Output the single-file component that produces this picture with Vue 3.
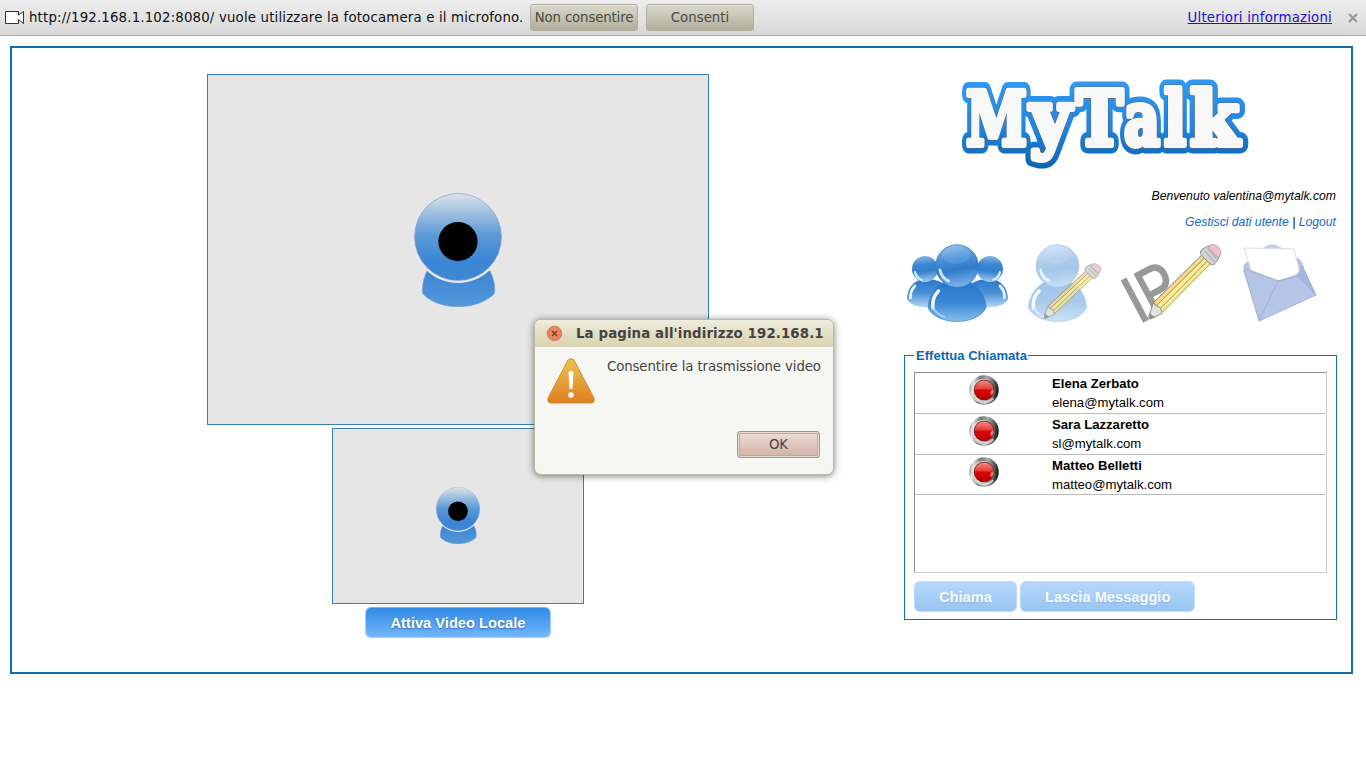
<script setup>
const contacts = [
  { name: 'Elena Zerbato', mail: 'elena@mytalk.com' },
  { name: 'Sara Lazzaretto', mail: 'sl@mytalk.com' },
  { name: 'Matteo Belletti', mail: 'matteo@mytalk.com' },
]
</script>

<template>
  <div class="page">
    <svg class="defs" width="0" height="0" aria-hidden="true">
      <defs>
        <linearGradient id="camHead" x1="0" y1="0" x2="0" y2="1">
          <stop offset="0" stop-color="#dfe3e8" />
          <stop offset=".2" stop-color="#a5c3e0" />
          <stop offset=".48" stop-color="#5c9ad6" />
          <stop offset=".78" stop-color="#3a86d4" />
          <stop offset="1" stop-color="#3e88d4" />
        </linearGradient>
        <linearGradient id="camBase" x1="0" y1="0" x2="0" y2="1">
          <stop offset="0" stop-color="#3c86d2" />
          <stop offset="1" stop-color="#5398da" />
        </linearGradient>
        <symbol id="cam" viewBox="0 0 88 114">
          <path d="M13 78C8 88 8 98 9 101C25 118 63 118 80 101C82 95 80 86 76 78Z" fill="url(#camBase)" stroke="#7f9ccf" stroke-width=".6" />
          <circle cx="44" cy="44.5" r="45.5" fill="#e9e9ec" />
          <circle cx="44" cy="44" r="43.5" fill="url(#camHead)" stroke="#8e9bd0" stroke-width=".7" />
          <circle cx="44" cy="48.5" r="19.6" fill="#000" />
        </symbol>
        <linearGradient id="sideHead" x1=".3" y1="0" x2=".4" y2="1">
          <stop offset="0" stop-color="#86b8e8" />
          <stop offset=".35" stop-color="#3a85d0" />
          <stop offset=".6" stop-color="#3580cd" />
          <stop offset="1" stop-color="#9cc8ef" />
        </linearGradient>
        <linearGradient id="sideBody" x1="0" y1="0" x2="0" y2="1">
          <stop offset="0" stop-color="#2a77c7" />
          <stop offset=".5" stop-color="#4a91d8" />
          <stop offset="1" stop-color="#b5d7f5" />
        </linearGradient>
        <linearGradient id="mainHead" x1=".3" y1="0" x2=".45" y2="1">
          <stop offset="0" stop-color="#8dbce9" />
          <stop offset=".35" stop-color="#4a90d7" />
          <stop offset=".6" stop-color="#2f7ccb" />
          <stop offset="1" stop-color="#7cb5ea" />
        </linearGradient>
        <linearGradient id="mainBody" x1="0" y1="0" x2="0" y2="1">
          <stop offset="0" stop-color="#2476ca" />
          <stop offset=".55" stop-color="#3a87d4" />
          <stop offset="1" stop-color="#86bff0" />
        </linearGradient>
        <symbol id="sidePerson" viewBox="0 0 36 52">
          <path d="M18 23C8 23 0 32 0 43C5 54 32 54 40 43V30Q32 23 18 23Z" fill="url(#sideBody)" />
          <circle cx="18" cy="13" r="13" fill="url(#sideHead)" />
          <path d="M8 16Q9 22 15 24" fill="none" stroke="#d8edff" stroke-width="2.200" stroke-linecap="round" />
          <path d="M3.500 42Q3 35 8 30" fill="none" stroke="#f0f8ff" stroke-width="2.600" stroke-linecap="round" />
        </symbol>
        <symbol id="person" viewBox="0 0 60 78">
          <path d="M29.500 35C14 35 1 48 .5 64C10 82 49 82 58.500 64C58.500 48 45 35 29.500 35Z" fill="url(#mainBody)" stroke="#3b82ca" stroke-width=".7" />
          <circle cx="29.500" cy="22" r="21.300" fill="url(#mainHead)" stroke="#3179c5" stroke-width=".7" />
          <ellipse cx="28.500" cy="11" rx="14" ry="9" fill="#d0e7fb" opacity=".12" />
          <path d="M12.500 26Q14 34 21 37" fill="none" stroke="#c8e4ff" stroke-width="3" stroke-linecap="round" />
          <path d="M5.500 64Q4 54 11 47" fill="none" stroke="#f2f9ff" stroke-width="3.500" stroke-linecap="round" />
          <path d="M5.500 64Q9 70 17 73" fill="none" stroke="#b4daff" stroke-width="2" stroke-linecap="round" opacity=".8" />
        </symbol>
        <symbol id="pencil" viewBox="0 0 76 80">
          <g stroke="#8b8b80" stroke-width="1" stroke-linejoin="round">
            <path d="M5 62L54 12L63 21L14 72Z" fill="#f7e884" />
            <path d="M5 62L54 12L57 15L8 65Z" fill="#fbd77b" />
            <path d="M8 65L57 15L60 18L11 69Z" fill="#ffed88" />
            <path d="M5 62L0 77L2 79L14 73L12 67L8 65Z" fill="#e7e4e0" />
            <path d="M1 73L0 79L6 77Z" fill="#888" />
            <path d="M54 12Q51 7 57 4L61 2L72 14L70 18Q66 24 63 21Z" fill="#cfcfcf" />
            <path d="M57 7L68 19M60 4L70 16" fill="none" stroke="#999" />
            <path d="M61 2Q66-1 71 3Q76 8 72 14Q65 11 61 2Z" fill="#f1bac9" stroke="#b49ca4" />
          </g>
        </symbol>
        <linearGradient id="rim" x1="0" y1=".3" x2="1" y2=".4">
          <stop offset="0" stop-color="#8d8d8d" />
          <stop offset=".12" stop-color="#e8e8e8" />
          <stop offset=".35" stop-color="#777" />
          <stop offset=".6" stop-color="#aaa" />
          <stop offset=".85" stop-color="#555" />
          <stop offset="1" stop-color="#111" />
        </linearGradient>
        <linearGradient id="ring" x1="0" y1="0" x2="1" y2="0">
          <stop offset="0" stop-color="#f0f0f0" />
          <stop offset=".6" stop-color="#b5b5b5" />
          <stop offset="1" stop-color="#555" />
        </linearGradient>
        <linearGradient id="redFill" x1="0" y1="0" x2="0" y2="1">
          <stop offset="0" stop-color="#f08d88" />
          <stop offset=".42" stop-color="#e4433c" />
          <stop offset=".5" stop-color="#dc0808" />
          <stop offset="1" stop-color="#b60000" />
        </linearGradient>
        <symbol id="light" viewBox="0 0 30 30">
          <circle cx="15" cy="15" r="14.700" fill="url(#rim)" />
          <path d="M5 24Q15 33 25 24L20 20H9Z" fill="#ddd" opacity=".85" />
          <circle cx="15" cy="15" r="11.300" fill="url(#ring)" />
          <circle cx="15" cy="15" r="10.300" fill="#7b2020" />
          <circle cx="15" cy="15" r="9.600" fill="url(#redFill)" />
          <path d="M24 14Q26 18 22 20Q20 17 24 14Z" fill="#e99" opacity=".8" />
        </symbol>
      </defs>
    </svg>

    <header class="infobar">
      <svg class="camera" width="19" height="13" viewBox="0 0 19 13">
        <path d="M.5 .5H13.500V4L18.500 .5V12.500L13.500 8.500V12.500H.5Z" fill="#fff" stroke="#333" />
      </svg>
      <span class="ask">http://192.168.1.102:8080/ vuole utilizzare la fotocamera e il microfono.</span>
      <button class="gtk tight">Non consentire</button>
      <button class="gtk">Consenti</button>
      <a class="more">Ulteriori informazioni</a>
      <svg class="close" width="10" height="10" viewBox="0 0 10 10"><path d="M1 1L9 9M9 1L1 9" stroke="#999" stroke-width="2.200" /></svg>
    </header>

    <main class="frame">
      <section class="videos">
        <div class="video remote"><svg width="88" height="114"><use href="#cam" /></svg></div>
        <div class="video local"><svg width="44" height="57"><use href="#cam" /></svg></div>
        <button class="blue">Attiva Video Locale</button>
      </section>

      <section class="side">
        <svg class="logo" width="290" height="92" viewBox="960 78 290 92">
          <defs>
            <linearGradient id="logoBlue" gradientUnits="userSpaceOnUse" x1="0" y1="80" x2="0" y2="168">
              <stop offset="0" stop-color="#3199f2" />
              <stop offset=".5" stop-color="#2188e2" />
              <stop offset="1" stop-color="#0864b5" />
            </linearGradient>
            <g id="word">
              <text x="966" y="145" textLength="61" lengthAdjust="spacingAndGlyphs">M</text>
              <text x="1030" y="142.500" textLength="41" lengthAdjust="spacingAndGlyphs">y</text>
              <text x="1076" y="145" textLength="47" lengthAdjust="spacingAndGlyphs">T</text>
              <text x="1124" y="145" textLength="36" lengthAdjust="spacingAndGlyphs">a</text>
              <text x="1164" y="145" textLength="22" lengthAdjust="spacingAndGlyphs">l</text>
              <text x="1190" y="145" textLength="49" lengthAdjust="spacingAndGlyphs">k</text>
            </g>
          </defs>
          <use class="edge" href="#word" />
          <use class="rimline" href="#word" />
          <use class="face" href="#word" />
        </svg>
        <p class="hello">Benvenuto valentina@mytalk.com</p>
        <p class="links"><a>Gestisci dati utente</a> | <a>Logout</a></p>

        <nav class="tools">
          <svg width="102" height="80" viewBox="0 0 102 80">
            <use href="#sidePerson" x="0" y="13" width="36" height="52" />
            <g transform="translate(101 13) scale(-1 1)"><use href="#sidePerson" width="36" height="52" /></g>
            <use href="#person" x="20.500" y="1" width="60" height="78" />
          </svg>
          <svg class="second" width="76" height="80" viewBox="0 0 76 80">
            <use class="faded" href="#person" x="0" y="1" width="60" height="78" />
            <g class="pale" transform="translate(16 20) scale(.77 .7)"><use href="#pencil" width="76" height="80" /></g>
          </svg>
          <svg class="third" width="102" height="80" viewBox="0 0 102 80">
            <text class="ip" transform="translate(18 81) rotate(-28)" textLength="51" lengthAdjust="spacingAndGlyphs">IP</text>
            <g transform="translate(27.500 1) scale(.98 .95)"><use href="#pencil" width="76" height="80" opacity=".93" /></g>
          </svg>
          <svg class="fourth" width="74" height="80" viewBox="0 0 74 80">
            <path d="M20 5Q29-2 37 4L43 7H20Z" fill="#c5cee2" />
            <path d="M0 25Q1 19 7 18L55 15Q61 19 61 27L35 48Z" fill="#b5c3de" />
            <path d="M0 27L35 38L60 23L73 52L16 78Z" fill="#afbfe2" />
            <path d="M1 5L51 6L57 30L37 38L8 27Z" fill="#fff" stroke="#ddd" />
            <path d="M1 26L35 38L16 78Z" fill="#b6c5e6" stroke="#a5b5da" />
            <path d="M35 38L54 33L73 52L16 78Z" fill="#b7c6e8" stroke="#a5b5da" />
            <path d="M35 38L54 33L59 23L73 52L54 33" fill="#a5b7dd" stroke="#a2b2d5" />
          </svg>
        </nav>

        <fieldset class="call">
          <legend>Effettua Chiamata</legend>
          <div class="list">
            <div v-for="c in contacts" :key="c.mail" class="row">
              <svg class="state" width="30" height="30"><use href="#light" /></svg>
              <div class="who"><b>{{ c.name }}</b><span>{{ c.mail }}</span></div>
            </div>
          </div>
          <div class="actions">
            <button class="blue off">Chiama</button>
            <button class="blue off">Lascia Messaggio</button>
          </div>
        </fieldset>
      </section>
    </main>

    <div class="dialog" role="alertdialog">
      <div class="title">
        <svg width="17" height="17" viewBox="0 0 17 17">
          <circle cx="8.500" cy="8.500" r="8" fill="#d7c9ad" />
          <circle cx="8.500" cy="8.500" r="7" fill="#f0845c" stroke="#cd765a" />
          <path d="M6 6L11 11M11 6L6 11" stroke="#61443a" stroke-width="1.400" />
        </svg>
        <strong>La pagina all'indirizzo 192.168.1</strong>
      </div>
      <div class="message">
        <svg width="48" height="46" viewBox="0 0 48 46">
          <defs>
            <linearGradient id="warn" x1="0" y1="0" x2="0" y2="1"><stop offset="0" stop-color="#edc456" /><stop offset="1" stop-color="#df7e20" /></linearGradient>
          </defs>
          <path d="M21 2Q24-1 27 2L47 40Q48 45 44 45H4Q0 45 1 40Z" fill="url(#warn)" stroke="#c98938" stroke-width=".9" />
          <path d="M21.500 14Q24 11.500 26.500 14L25.500 31H22.500Z" fill="#fff" />
          <circle cx="24" cy="37" r="2.800" fill="#fff" />
        </svg>
        <span>Consentire la trasmissione video</span>
      </div>
      <button class="ok">OK</button>
    </div>
  </div>
</template>

<style>
body { margin: 0; background: #fff; overflow: hidden; }
</style>

<style scoped>
.page { position: relative; height: 764px; background: #fff; font-family: "Liberation Sans", Arial, sans-serif; }
.page * { box-sizing: border-box; }
.defs { position: absolute; }
button { margin: 0; padding: 0; font: inherit; white-space: nowrap; }

.infobar { display: flex; align-items: center; height: 36px; padding: 1px 8px 1px 5px; border-bottom: 1px solid #a7a7b8; background: linear-gradient(#ededed, #d9d9d9); color: #111; font: 13.33px "DejaVu Sans", sans-serif; }
.camera { margin-right: 5px; }
.ask { width: 501px; letter-spacing: .165px; white-space: nowrap; }
.gtk { width: 108px; height: 27px; margin-right: 8px; border: 1px solid #b0af9f; border-radius: 3px; background: linear-gradient(#d9d9cb, #c5c4b3 50%, #aead99); box-shadow: inset 0 1px #e5e5d9; color: #4a4a43; }
.tight { letter-spacing: -.15px; }
.more { margin-left: auto; color: #1a12d0; letter-spacing: .2px; text-decoration: underline; white-space: nowrap; }
.close { margin-left: 16px; }

.frame { display: grid; grid-template-columns: 892px 433px; width: 1343px; height: 628px; margin: 10px 0 0 10px; border: 2px solid #116aa9; }
.videos { display: flex; flex-direction: column; align-items: center; padding-top: 26px; }
.video { display: flex; justify-content: center; border: 1px solid #3580b5; background: #e6e6e6; }
.remote { width: 502px; height: 351px; padding-top: 117.6px; }
.local { width: 252px; height: 176px; margin-top: 3px; padding-top: 58px; }
.blue { height: 31px; padding: 0 24px; border: 1px solid #a6d0f5; border-top-color: #79b8ee; border-radius: 6px; background: linear-gradient(#2f8ae6, #74b6fc); color: #fff; font-size: 14.67px; font-weight: bold; text-shadow: 0 1px 2px rgba(0, 50, 110, .5); }
.videos .blue { width: 186px; margin-top: 3px; }

.side { display: flex; flex-direction: column; }
.logo { display: block; overflow: visible; margin: 30px 0 0 56px; font-family: "DejaVu Serif", serif; font-size: 75px; font-weight: bold; }
.edge { fill: url(#logoBlue); stroke: url(#logoBlue); stroke-width: 17; stroke-linejoin: round; }
.rimline { fill: #58687c; stroke: #58687c; stroke-width: 7.2; stroke-linejoin: round; }
.face { fill: #f8f8f8; stroke: #f8f8f8; stroke-width: 5.8; stroke-linejoin: round; }
.hello, .links { height: 16px; margin: 18px 1px 0 0; color: #000; font-size: 12.2px; font-style: italic; line-height: 16px; text-align: right; white-space: nowrap; }
.links { margin-top: 10px; }
.links a { color: #0b6cc4; }

.tools { display: flex; height: 80px; margin: 13px 0 0 3px; }
.second { margin-left: 19px; }
.third { margin-left: 17px; overflow: visible; }
.fourth { margin-left: 20px; }
.faded { opacity: .43; }
.pale { opacity: .8; }
.ip { fill: #999; stroke: #999; stroke-width: 1.6; font-family: "Liberation Sans", Arial, sans-serif; font-size: 67px; }

.call { height: 273px; margin: 24px 0 0; padding: 9px 9px 0; border: 1px solid #1670ac; min-width: 0; }
.call legend { padding: 1px 1px 0 2px; color: #0b69b3; font-size: 13.05px; font-weight: bold; line-height: 15px; }
.list { height: 201px; border: 1px solid #8e8e8e; border-right-color: #ccc; border-bottom-color: #ccc; }
.row { display: grid; grid-template-columns: 137px 1fr; height: 41px; margin-right: 1px; border-bottom: 1px solid #bbb; }
.row:nth-child(3) { height: 40px; }
.state { margin: 2px auto 0; }
.who { display: flex; flex-direction: column; color: #000; font-size: 13.15px; line-height: 19px; padding-top: 1px; }
.actions { display: flex; gap: 3px; margin-top: 8px; }
.off { border-color: #bcdcf8; background: linear-gradient(#b5d8fd, #99c5f1); color: #f7fbff; text-shadow: 0 1px 2px rgba(80, 130, 180, .25); }

.dialog { position: absolute; left: 534px; top: 319px; width: 300px; height: 156px; border: 1px solid #bdb9a5; border-radius: 7px; background: #f6f6f2; box-shadow: 0 1px 7px rgba(0, 0, 0, .5); color: #444; font: 13.33px "DejaVu Sans", sans-serif; overflow: hidden; }
.title { display: flex; align-items: center; gap: 13px; height: 27px; padding-left: 11px; background: linear-gradient(#f0eedf, #e2dcc1 55%, #dcd4b2); letter-spacing: .12px; white-space: nowrap; }
.message { display: flex; gap: 12px; padding: 11px 0 0 12px; letter-spacing: -.12px; white-space: nowrap; }
.message span { padding-top: 1px; }
.ok { display: block; width: 83px; height: 27px; margin: 27px 13px 0 auto; border: 1px solid #9a9888; border-radius: 3px; background: linear-gradient(#f0ddd5, #d0b3a6); box-shadow: inset 0 0 0 1px #e4ded1, inset 0 0 0 2px #e69a87; color: #444; }
</style>
